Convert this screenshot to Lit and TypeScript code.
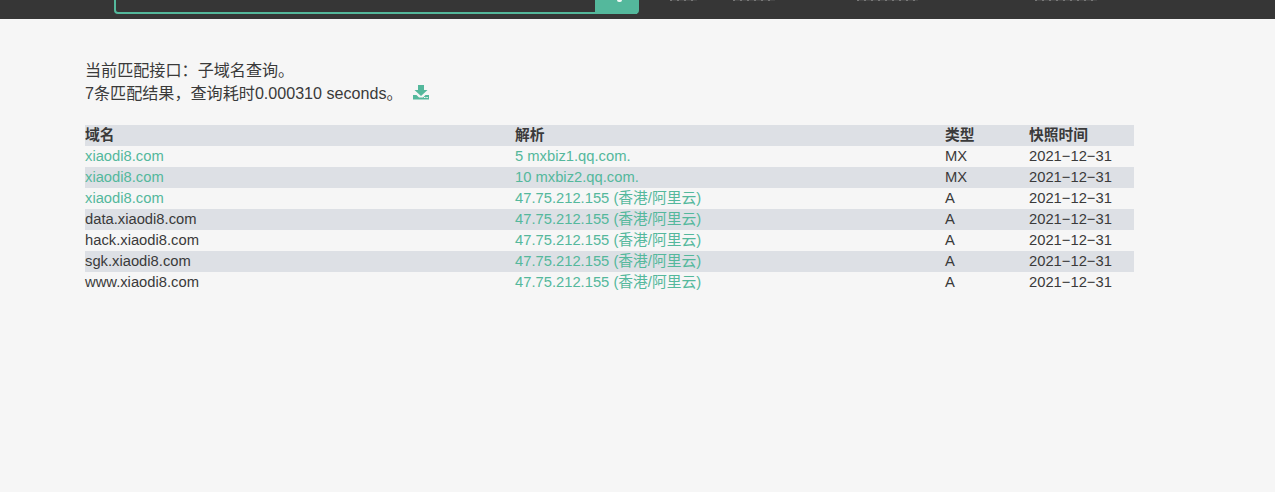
import { LitElement, html, css } from "lit";
import { customElement } from "lit/decorators.js";

const rows = [
  ["xiaodi8.com", true, "5 mxbiz1.qq.com.", "MX"],
  ["xiaodi8.com", true, "10 mxbiz2.qq.com.", "MX"],
  ["xiaodi8.com", true, "47.75.212.155 (香港/阿里云)", "A"],
  ["data.xiaodi8.com", false, "47.75.212.155 (香港/阿里云)", "A"],
  ["hack.xiaodi8.com", false, "47.75.212.155 (香港/阿里云)", "A"],
  ["sgk.xiaodi8.com", false, "47.75.212.155 (香港/阿里云)", "A"],
  ["www.xiaodi8.com", false, "47.75.212.155 (香港/阿里云)", "A"],
] as const;

@customElement("app-root")
export class AppRoot extends LitElement {
  static styles = css`
    :host {
      display: block;
      min-height: 492px;
      background: #f6f6f6;
      color: #3a3a3a;
      font-family: "Liberation Sans", "Noto Sans CJK SC", sans-serif;
      font-size: 14.75px;
    }
    .top {
      height: 19px;
      background: #363636;
      overflow: hidden;
      display: flex;
      padding-left: 114px;
      box-sizing: border-box;
    }
    .search {
      width: 525px;
      height: 14px;
      box-sizing: border-box;
      border: 2px solid #54b89c;
      border-top: 0;
      border-radius: 0 0 4px 4px;
      display: flex;
      justify-content: flex-end;
      flex: none;
    }
    .btn {
      width: 42px;
      background: #54b89c;
      margin-bottom: -2px;
      display: flex;
      justify-content: center;
    }
    .glass {
      width: 5px;
      height: 2px;
      margin-left: 6px;
      border-radius: 0 0 3px 3px;
      background: #f2f8f6;
    }
    .nav {
      height: 1px;
      flex: none;
      background: repeating-linear-gradient(90deg, #777 0 2px, #454545 2px 7px);
    }
    .n1 { width: 27px; margin-left: 31px; }
    .n2 { width: 42px; margin-left: 36px; }
    .n3 { width: 61px; margin-left: 82px; }
    .n4 { width: 62px; margin-left: 117px; }
    .info {
      padding: 40px 0 0 85px;
      font-size: 16.1px;
      line-height: 23px;
    }
    .dl {
      margin-left: 10px;
      vertical-align: -1px;
    }
    .table {
      margin: 20px 0 0 85px;
      width: 1049px;
      display: grid;
      grid-template-columns: 430px 430px 84px 105px;
    }
    .row {
      display: grid;
      grid-template-columns: subgrid;
      grid-column: 1 / -1;
      height: 21px;
      line-height: 21px;
    }
    .row:nth-child(odd) {
      background: #dde0e5;
    }
    .head {
      font-weight: 700;
    }
    .link {
      color: #54b89c;
    }
  `;

  render() {
    return html`
      <div class="top">
        <div class="search"><div class="btn"><div class="glass"></div></div></div>
        <span class="nav n1"></span><span class="nav n2"></span><span class="nav n3"></span><span class="nav n4"></span>
      </div>
      <div class="info">
        <div>当前匹配接口：子域名查询。</div>
        <div>7条匹配结果，查询耗时0.000310 seconds。<svg class="dl" width="16" height="15" viewBox="0 0 16 15"><path fill="#54b89c" fill-rule="evenodd" d="M5 0h6v5h3.500L8 11 1.500 5H5zM0 10h3.500l2.500 2.500h4l2.500-2.500H16v4.500H0zM11 12h1.500v1H11zM13.300 12h1.500v1h-1.500z"/></svg></div>
      </div>
      <div class="table">
        <div class="row head"><span>域名</span><span>解析</span><span>类型</span><span>快照时间</span></div>
        ${rows.map(
          (r) => html`<div class="row">
            <span class=${r[1] ? "link" : ""}>${r[0]}</span>
            <span class="link">${r[2]}</span>
            <span>${r[3]}</span>
            <span>2021−12−31</span>
          </div>`
        )}
      </div>
    `;
  }
}
